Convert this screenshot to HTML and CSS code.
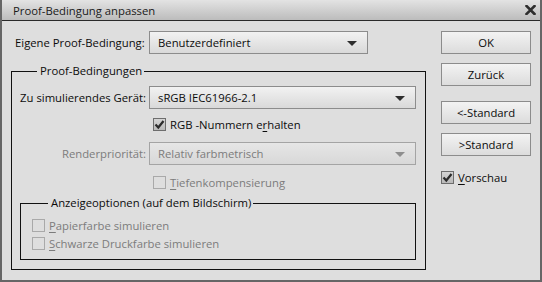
FILE: index.html
```html
<!DOCTYPE html>
<html lang="de">
<head>
    <meta charset="UTF-8">
    <title>Proof-Bedingung anpassen</title>
    <link rel="stylesheet" href="styles.css">
</head>
<body>
    <div class="window">
        <div class="titlebar">
            <span class="title">Proof-Bedingung anpassen</span>
            <svg class="close" width="11" height="10" viewBox="0 0 11 10">
                <path d="M1.5 1 L9.5 9 M9.5 1 L1.5 9" stroke="#2e2e2e" stroke-width="2.6" stroke-linecap="square"/>
            </svg>
        </div>

        <div class="content">
            <div class="main">
                <!-- Preset -->
                <div class="row preset">
                    <span class="label">Eigene Proof-Bedingung:</span>
                    <div class="select wide">
                        <span>Benutzerdefiniert</span>
                        <i class="arrow"></i>
                    </div>
                </div>

                <fieldset class="group">
                    <legend>Proof-Bedingungen</legend>
                    <div class="grid">
                        <span class="label right">Zu simulierendes Gerät:</span>
                        <div class="select">
                            <span>sRGB IEC61966-2.1</span>
                            <i class="arrow"></i>
                        </div>

                        <span></span>
                        <label class="check-row rgb">
                            <span class="box checked">
                                <svg width="11" height="11" viewBox="0 0 11 11"><path d="M1.5 5.5 L4.3 8.5 L9.5 2" fill="none" stroke="#2b2b2b" stroke-width="2.2"/></svg>
                            </span>
                            <span>RGB -Nummern e<u>r</u>halten</span>
                        </label>

                        <span class="label right disabled">Renderpriorität:</span>
                        <div class="select disabled">
                            <span>Relativ farbmetrisch</span>
                            <i class="arrow"></i>
                        </div>

                        <span></span>
                        <label class="check-row depth disabled">
                            <span class="box"></span>
                            <span><u>T</u>iefenkompensierung</span>
                        </label>
                    </div>

                    <fieldset class="group inner">
                        <legend>Anzeigeoptionen (auf dem Bildschirm)</legend>
                        <label class="check-row disabled">
                            <span class="box"></span>
                            <span><u>P</u>apierfarbe simulieren</span>
                        </label>
                        <label class="check-row disabled">
                            <span class="box"></span>
                            <span><u>S</u>chwarze Druckfarbe simulieren</span>
                        </label>
                    </fieldset>
                </fieldset>
            </div>

            <div class="side">
                <button class="btn">OK</button>
                <button class="btn">Zurück</button>
                <button class="btn spaced">&lt;-Standard</button>
                <button class="btn">&gt;Standard</button>
                <label class="check-row preview">
                    <span class="box checked">
                        <svg width="11" height="11" viewBox="0 0 11 11"><path d="M1.5 5.5 L4.3 8.5 L9.5 2" fill="none" stroke="#2b2b2b" stroke-width="2.2"/></svg>
                    </span>
                    <span><u>V</u>orschau</span>
                </label>
            </div>
        </div>
    </div>
</body>
</html>
```

FILE: styles.css
```css
:root {
    --bg: #dedede;
    --text: #0c0c0c;
    --muted: #7c7c7c;
    --line: #111;
    --field-border: #8c8c8c;
}

* {
    box-sizing: border-box;
}

body {
    margin: 0;
    font-family: "Open Sans", "Noto Sans", sans-serif;
    font-size: 11.3px;
    color: var(--text);
    background: var(--bg);
}

.window {
    width: 542px;
    height: 282px;
    background: var(--bg);
    border: 2px solid #666;
    border-top: none;
}

.titlebar {
    height: 21px;
    display: flex;
    align-items: center;
    justify-content: space-between;
    padding: 0 4px 0 11px;
    background: linear-gradient(to bottom, #e3e3e3, #bcbcbc);
    border-bottom: 1px solid #2a2a2a;
}

.title {
    color: #1a1a1a;
}

.content {
    display: flex;
    gap: 15px;
    padding: 10px 0 0 9px;
}

.main {
    width: 415px;
}

.label,
.check-row {
    white-space: nowrap;
}

.row {
    display: flex;
    align-items: center;
}

.preset {
    padding-left: 4px;
    margin-bottom: 9px;
}

.preset .label {
    width: 134px;
}

.label.right {
    text-align: right;
    padding-right: 3px;
}

.disabled {
    color: var(--muted);
}

/* dropdowns */
.select {
    position: relative;
    height: 23px;
    display: flex;
    align-items: center;
    padding-left: 8px;
    border: 1px solid var(--field-border);
    background: linear-gradient(to bottom, #f2f2f2, #d9d9d9);
}

.select.wide {
    width: 219px;
}

.select.disabled {
    border-color: #a4a4a4;
    background: linear-gradient(to bottom, #e6e6e6, #d8d8d8);
}

.arrow {
    position: absolute;
    right: 10px;
    top: 9px;
    width: 0;
    height: 0;
    border-left: 5px solid transparent;
    border-right: 5px solid transparent;
    border-top: 5px solid #2e2e2e;
}

.select.disabled .arrow {
    border-top-color: #8e8e8e;
}

/* group boxes */
.group {
    margin: 0;
    padding: 7px 9px 9px 8px;
    border: 1px solid var(--line);
    min-width: 0;
}

.group legend {
    margin-left: 17px;
    padding: 0 2px 0 3px;
    line-height: 16px;
}

.grid {
    display: grid;
    grid-template-columns: 129px 1fr;
    align-items: center;
}

.grid .rgb {
    margin: 9px 0 11px;
}

.grid .depth {
    margin-top: 11px;
}

.check-row {
    display: flex;
    align-items: center;
    gap: 4px;
    height: 13px;
    padding-left: 4px;
}

.box {
    width: 13px;
    height: 13px;
    display: flex;
    align-items: center;
    justify-content: center;
    border: 1px solid #a9a9a9;
    background: var(--bg);
}

.box.checked {
    border-color: #6d6d6d;
    background: linear-gradient(to bottom, #d4d4d4, #b9b9b9);
}

u {
    text-decoration-thickness: 1px;
    text-underline-offset: 2px;
}

.group.inner {
    margin-top: 6px;
    padding: 8px 0 9px 10px;
}

.group.inner .check-row {
    padding-left: 1px;
}

.group.inner .check-row + .check-row {
    margin-top: 5px;
}

/* side buttons */
.side {
    width: 90px;
    display: flex;
    flex-direction: column;
}

.btn {
    height: 23px;
    margin-bottom: 9px;
    font: inherit;
    color: var(--text);
    border: 1px solid var(--field-border);
    background: linear-gradient(to bottom, #f3f3f3, #dcdcdc);
    padding: 0;
}

.btn.spaced {
    margin-top: 6px;
}

.preview {
    margin-top: 6px;
    padding-left: 0;
}
```
